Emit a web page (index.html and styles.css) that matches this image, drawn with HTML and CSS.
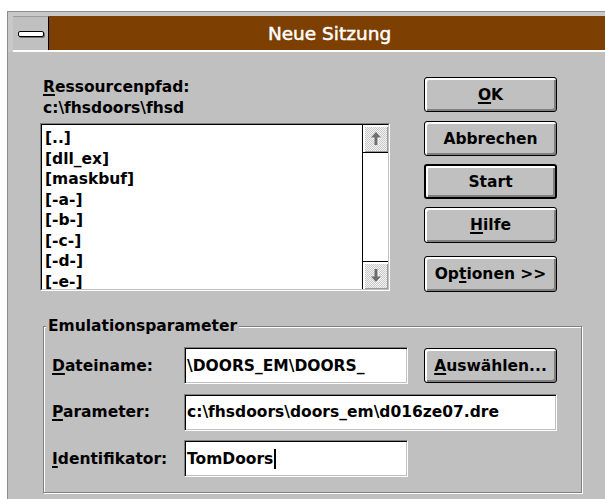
FILE: index.html
```html
<!DOCTYPE html>
<html lang="de">
<head>
<meta charset="utf-8">
<title>Neue Sitzung</title>
<link rel="stylesheet" href="styles.css">
</head>
<body>
<div class="window">
  <div class="frame-top">
    <div class="titlebar">
      <div class="sysmenu"><span class="sysmenu-bar"></span></div>
      <div class="caption">Neue Sitzung</div>
    </div>
  </div>
  <div class="client">
    <div class="top-row">
      <div class="path-col">
        <div class="path-label"><u>R</u>essourcenpfad:</div>
        <div class="path-value">c:\fhsdoors\fhsd</div>
        <div class="listbox">
          <div class="listbox-inner">
            <ul class="list-items">
              <li>[..]</li>
              <li>[dll_ex]</li>
              <li>[maskbuf]</li>
              <li>[-a-]</li>
              <li>[-b-]</li>
              <li>[-c-]</li>
              <li>[-d-]</li>
              <li>[-e-]</li>
            </ul>
            <div class="scrollbar">
              <div class="scroll-btn scroll-up">
                <svg width="10" height="13" viewBox="0 0 10 13"><path d="M6 1 L11 6.5 H7.5 V14 H4.5 V6.5 H1 Z" fill="#fff"/><path d="M5 0 L10 5.5 H6.5 V13 H3.5 V5.5 H0 Z" fill="#6e6e6e"/></svg>
              </div>
              <div class="scroll-track"></div>
              <div class="scroll-btn scroll-down">
                <svg width="10" height="13" viewBox="0 0 10 13"><path d="M6 14 L11 8.5 H7.5 V1 H4.5 V8.5 H1 Z" fill="#fff"/><path d="M5 13 L10 7.5 H6.5 V0 H3.5 V7.5 H0 Z" fill="#6e6e6e"/></svg>
              </div>
            </div>
          </div>
        </div>
      </div>
      <div class="button-col">
        <button class="btn"><u>O</u>K</button>
        <button class="btn btn-cancel">Abbrechen</button>
        <button class="btn btn-default">Start</button>
        <button class="btn"><u>H</u>ilfe</button>
        <button class="btn btn-options">Op<u>t</u>ionen &gt;&gt;</button>
      </div>
    </div>
    <div class="group">
      <div class="group-title">Emulationsparameter</div>
      <div class="fields">
        <label class="field-label"><span><u>D</u>ateiname:</span></label>
        <div class="edit">\DOORS_EM\DOORS_</div>
        <button class="btn btn-browse"><u>A</u>uswählen...</button>
        <label class="field-label"><span><u>P</u>arameter:</span></label>
        <div class="edit edit-wide">c:\fhsdoors\doors_em\d016ze07.dre</div>
        <label class="field-label"><span><u>I</u>dentifikator:</span></label>
        <div class="edit">TomDoors<span class="caret"></span></div>
      </div>
    </div>
  </div>
</div>
</body>
</html>
```
FILE: styles.css
```css
* {
  box-sizing: border-box;
}

html,
body {
  margin: 0;
}

body {
  height: 499px;
  overflow: hidden;
  background: #fff;
  padding: 11px 0 0 7px;
  font-family: "DejaVu Sans", "Noto Sans", sans-serif;
  font-weight: bold;
  font-size: 15.5px;
  color: #000;
}

u {
  text-decoration: underline;
  text-decoration-thickness: 1.5px;
  text-underline-offset: 2px;
}

/* window frame */
.window {
  width: 603px;
  height: 500px;
  border-top: 1px solid #8c8c8c;
  border-left: 1px solid #8c8c8c;
  background: #c0c0c0;
}

.frame-top {
  background: #c8c8c8;
  padding: 4px 0 0 5px;
}

.titlebar {
  display: flex;
  height: 36px;
  border-bottom: 2px solid #fff;
}

.sysmenu {
  width: 36px;
  flex: none;
  display: flex;
  align-items: center;
  justify-content: center;
  background: #c0c0c0;
  border-top: 1px solid #9a9a9a;
  border-right: 1px solid #000;
}

.sysmenu-bar {
  display: block;
  width: 26px;
  height: 6px;
  margin-top: 1px;
  background: #fff;
  border: 1px solid #000;
  border-radius: 2px;
  box-shadow: 1px 1px 0 #707070;
}

.caption {
  flex: 1;
  text-align: center;
  color: #fff;
  font-size: 18.5px;
  font-weight: normal;
  -webkit-text-stroke: 0.5px #fff;
  line-height: 30px;
  padding-top: 3px;
  background-color: #7e3f00;
  background-image: repeating-conic-gradient(#883800 0 25%, #704600 0 50%);
  background-size: 2px 2px;
}

/* dialog client area */
.client {
  padding: 25px 0 0 32px;
}

.top-row {
  display: flex;
  align-items: flex-start;
}

.path-col {
  width: 350px;
  flex: none;
}

.path-label,
.path-value {
  padding-left: 3px;
  line-height: 21px;
  white-space: nowrap;
}

.listbox {
  margin-top: 4px;
  height: 168px;
  border: 1px solid;
  border-color: #808080 #fff #fff #808080;
}

.listbox-inner {
  height: 100%;
  display: flex;
  border: 1px solid;
  border-color: #000 #c0c0c0 #c0c0c0 #000;
  background: #fff;
}

.list-items {
  flex: 1;
  list-style: none;
  margin: 0;
  padding: 3px 0 0 3px;
  line-height: 20.5px;
  white-space: nowrap;
  overflow: hidden;
}

.scrollbar {
  width: 26px;
  flex: none;
  display: flex;
  flex-direction: column;
  border-left: 1px solid #000;
}

.scroll-btn {
  height: 28px;
  display: flex;
  align-items: center;
  justify-content: center;
  background-color: #dedede;
  background-image: repeating-conic-gradient(#f4f4f4 0 25%, #c8c8c8 0 50%);
  background-size: 2px 2px;
  box-shadow: inset 2px 2px 0 #fff, inset -1px -1px 0 #9a9a9a;
}

.scroll-up {
  border-bottom: 1px solid #000;
}

.scroll-down {
  border-top: 1px solid #000;
}

.scroll-track {
  flex: 1;
  background: #fff;
}

/* push buttons */
.button-col {
  width: 133px;
  margin-left: 34px;
  display: flex;
  flex-direction: column;
}

.btn {
  height: 35px;
  padding: 0;
  font: inherit;
  color: #000;
  background: #c0c0c0;
  border: 1px solid #000;
  border-radius: 3px;
  box-shadow: inset 2px 2px 0 #fff, inset -2px -2px 0 #808080;
  white-space: nowrap;
}

.btn-cancel {
  margin-top: 9px;
}

.btn-default {
  margin-top: 8px;
  border-width: 2px;
}

.btn-default + .btn {
  margin-top: 8px;
  height: 36px;
}

.btn-options {
  margin-top: 13px;
  height: 36px;
}

/* group box */
.group {
  width: 539px;
  height: 167px;
  margin: 34px 0 0 3px;
  border: 1px solid #808080;
  box-shadow: 1px 1px 0 #fff, inset 1px 1px 0 #fff;
}

.group-title {
  width: fit-content;
  margin: -10px 0 0 2px;
  padding: 0 2px;
  line-height: 18px;
  background: #c0c0c0;
}

.fields {
  display: grid;
  grid-template-columns: 116px 224px 133px;
  grid-template-rows: 37px 37px 37px;
  column-gap: 16px;
  row-gap: 9.5px;
  margin: 12px 0 0 8px;
}

.field-label {
  display: flex;
  align-items: center;
  white-space: nowrap;
}

.edit {
  display: flex;
  align-items: center;
  padding-left: 2px;
  background: #fff;
  border: 1px solid;
  border-color: #808080 #fff #fff #808080;
  box-shadow: inset 1px 1px 0 #000, inset -1px -1px 0 #c0c0c0;
  white-space: nowrap;
  overflow: hidden;
}

.edit-wide {
  grid-column: 2 / 4;
}

.btn-browse {
  align-self: center;
}

.caret {
  display: inline-block;
  width: 2px;
  height: 20px;
  margin-left: 1px;
  background: #000;
}
```
